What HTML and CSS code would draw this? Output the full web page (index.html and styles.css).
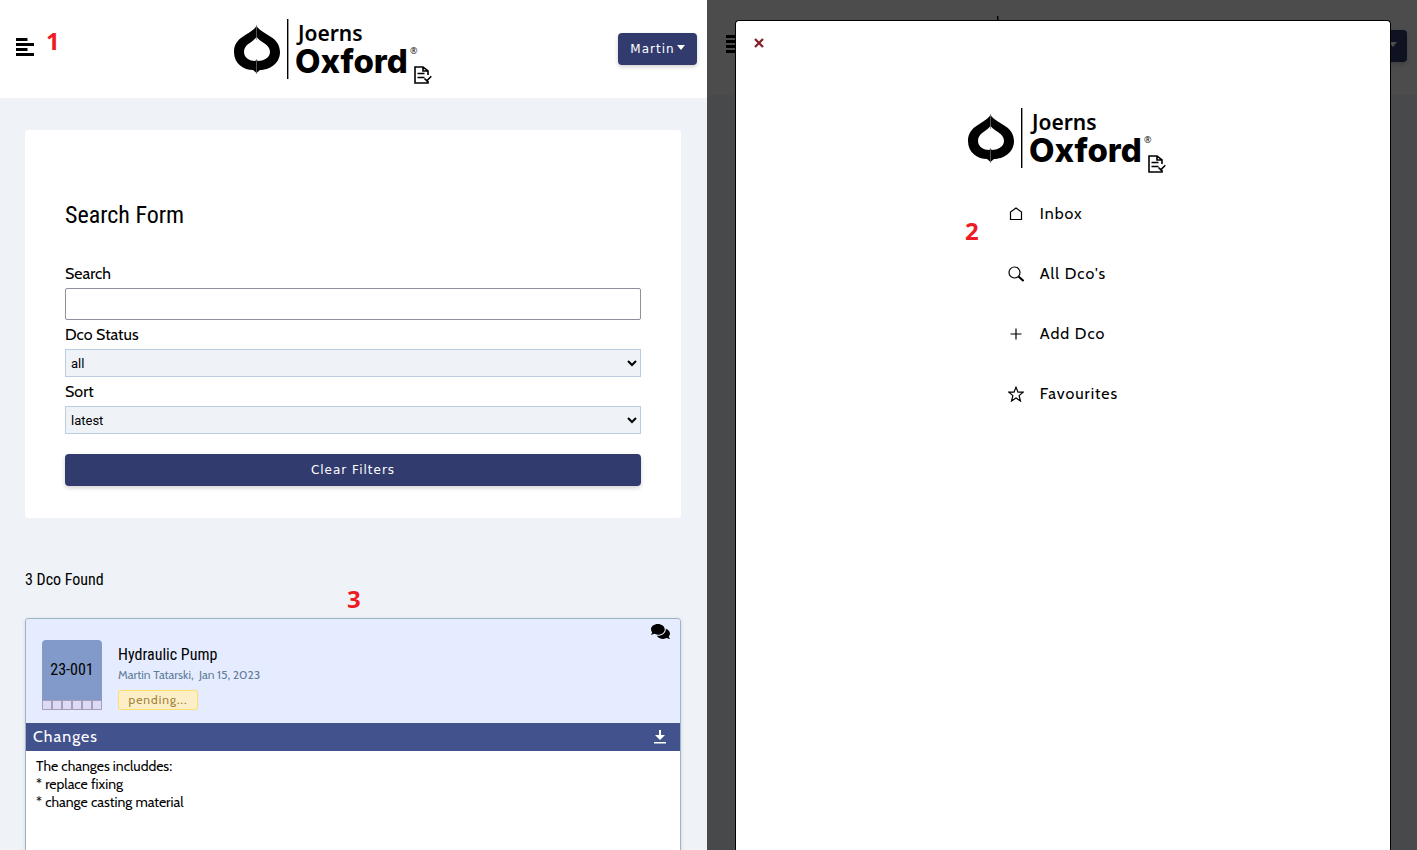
FILE: index.html
```html
<!DOCTYPE html>
<html lang="en">
<head>
<meta charset="utf-8">
<title>Joerns Oxford Dco</title>
<link rel="stylesheet" href="styles.css">
</head>
<body>
<svg class="defs" aria-hidden="true">
  <symbol id="menu" viewBox="0 0 18 18"><path d="M.5 0h10.500q.5 0 .5.500v2q0 .5-.5.500H.500q-.5 0-.5-.5v-2Q0 0 .5 0zM0 5h18v3H0zM0 10h11.500v3H0zM0 15h18v3H0z"/></symbol>
  <symbol id="logo" viewBox="0 0 200 68">
    <path fill-rule="evenodd" d="M23.500 8C18 17 1 18 1 34C1 46 11 52 20 52L23.500 55L27 52C36 52 47 46 47 34C47 18 29 17 23.500 8ZM23.500 19C19 25 11 26 11 34C11 40 17 43 22 43L23.500 42L25 43C30 43 37 40 37 34C37 26 28 25 23.500 19Z"/>
    <path d="M23.500 7v15M23.500 41v15" stroke="#777" stroke-width=".7"/>
    <path d="M54 1h1.400v60H54z"/>
    <path fill="none" stroke="currentColor" stroke-width="1.600" d="M195 57v-4l-5-4h-8v16h13v-2M190 49v4h5M184.500 55.500h7M184.500 59.500h7M191.500 60.500l2.300 2.300 4.500-4.500"/>
  </symbol>
</svg>
<div class="screens">
  <section class="screen">
    <header class="topbar">
      <button class="menu-button" aria-label="Open menu"><svg class="menu-icon"><use href="#menu"/></svg></button>
      <svg class="logo" viewBox="0 0 200 68" role="img" aria-label="Joerns Oxford">
        <use href="#logo"/>
        <text class="logo-small" x="65" y="23">Joerns</text>
        <text class="logo-large" x="62" y="55">Oxford</text>
        <text class="logo-mark" x="177" y="36">®</text>
      </svg>
      <button class="button user-button">Martin<span class="caret"></span></button>
      <span class="note note-one">1</span>
    </header>
    <main class="content">
      <form class="search-form">
        <h1 class="form-title">Search Form</h1>
        <label class="label" for="search">Search</label>
        <input class="field" id="search" type="text">
        <label class="label" for="status">Dco Status</label>
        <select class="select" id="status"><option>all</option></select>
        <label class="label" for="sort">Sort</label>
        <select class="select" id="sort"><option>latest</option></select>
        <button class="button clear-button" type="button">Clear Filters</button>
      </form>
      <h2 class="result-title">3 Dco Found</h2>
      <article class="card">
        <span class="note note-three">3</span>
        <header class="card-head">
          <div class="number">
            <div class="number-box">23-001</div>
            <div class="steps"><i class="step"></i><i class="step"></i><i class="step"></i><i class="step"></i><i class="step"></i><i class="step"></i></div>
          </div>
          <div class="card-info">
            <h3 class="card-title">Hydraulic Pump</h3>
            <p class="meta">Martin Tatarski,&nbsp; Jan 15, 2023</p>
            <span class="status">pending...</span>
          </div>
          <svg class="chat-icon" viewBox="0 0 576 512" role="img" aria-label="Comments"><path d="M416 192c0-88.400-93.100-160-208-160S0 103.600 0 192c0 34.300 14.100 65.900 38 92-13.400 30.200-35.500 54.200-35.800 54.500-2.200 2.300-2.800 5.700-1.500 8.700S4.800 352 8 352c36.600 0 66.900-12.300 88.700-25 32.200 15.700 70.300 25 111.300 25 114.900 0 208-71.600 208-160zm122 220c23.900-26 38-57.700 38-92 0-66.900-53.500-124.200-129.300-148.100.9 6.600 1.300 13.300 1.300 20.100 0 105.900-107.700 192-240 192-10.800 0-21.300-.8-31.700-1.900C207.800 439.600 281.800 480 368 480c41 0 79.100-9.200 111.300-25 21.800 12.700 52.100 25 88.700 25 3.200 0 6.100-1.900 7.300-4.800 1.300-2.900.7-6.300-1.500-8.700-.3-.3-22.400-24.200-35.800-54.500z"/></svg>
        </header>
        <div class="changes-bar">
          <h4 class="changes-title">Changes</h4>
          <button class="download" aria-label="Download changes"><svg class="download-icon" viewBox="0 0 12 14"><path d="M5 0h2v5h4L6 10 1 5h4zM0 12h12v1.500H0z"/></svg></button>
        </div>
        <p class="changes-text">The changes includdes:<br>* replace fixing<br>* change casting material</p>
      </article>
    </main>
  </section>
  <section class="screen screen-dimmed">
    <div class="backdrop" aria-hidden="true">
      <div class="topbar topbar-behind">
        <span class="menu-button"><svg class="menu-icon"><use href="#menu"/></svg></span>
        <svg class="logo" viewBox="0 0 200 68"><use href="#logo"/></svg>
        <span class="button user-button"><span class="caret"></span></span>
      </div>
    </div>
    <aside class="drawer">
      <button class="close" aria-label="Close menu"><svg class="close-icon" viewBox="0 0 10 10"><path d="M1 1l8 8M9 1l-8 8"/></svg></button>
      <svg class="logo drawer-logo" viewBox="0 0 200 68" role="img" aria-label="Joerns Oxford">
        <use href="#logo"/>
        <text class="logo-small" x="65" y="23">Joerns</text>
        <text class="logo-large" x="62" y="55">Oxford</text>
        <text class="logo-mark" x="177" y="36">®</text>
      </svg>
      <nav class="nav">
        <a class="nav-link" href="#"><svg class="nav-icon" viewBox="0 0 16 16"><path d="M2.500 13.500V6L8 2l5.500 4v7.500z"/></svg>Inbox</a>
        <a class="nav-link" href="#"><svg class="nav-icon" viewBox="0 0 16 16"><circle cx="6.500" cy="6.500" r="5.500"/><path d="M10.500 10.500l5 4.500" stroke-width="2"/></svg>All Dco's</a>
        <a class="nav-link" href="#"><svg class="nav-icon" viewBox="0 0 16 16"><path d="M8 2.500v11M2.500 8h11"/></svg>Add Dco</a>
        <a class="nav-link" href="#"><svg class="nav-icon" viewBox="0 0 16 16"><path d="M8 1.200l2 5h5.200l-4.100 3.400 1.400 5.400L8 12l-4.500 3 1.400-5.400L.8 6.200H6z"/></svg>Favourites</a>
      </nav>
      <span class="note note-two">2</span>
    </aside>
  </section>
</div>
</body>
</html>
```
FILE: styles.css
```css
* { box-sizing: border-box; }
body {
  margin: 0;
  color: #000;
  font: 16px/20px Cabin, Lato, sans-serif;
}
h1, h2, h3, h4, p { margin: 0; font-weight: 400; }
.defs { position: absolute; width: 0; height: 0; }
.screens {
  display: grid;
  grid-template-columns: 707fr 710fr;
  min-height: 100vh;
}
.screen {
  display: flex;
  flex-direction: column;
  background: #eff3f8;
}
.topbar {
  position: relative;
  display: flex;
  align-items: center;
  justify-content: space-between;
  height: 98px;
  padding: 0 10px 0 16px;
  background: #fff;
}
.menu-button {
  width: 32px;
  padding: 0;
  border: 0;
  background: none;
  text-align: left;
}
.menu-icon { display: block; width: 18px; height: 18px; margin-bottom: 4px; }
.logo { width: 200px; height: 68px; margin-top: 6px; }
.logo-small { font: 600 21px "Noto Sans", sans-serif; }
.logo-large { font: 800 33px Inter, "Open Sans", sans-serif; }
.logo-mark { font: 9px "Open Sans", sans-serif; }
.button {
  height: 32px;
  border: 0;
  border-radius: 4px;
  background: #323b6e;
  color: #fff;
  font: 12px/20px "DejaVu Sans", sans-serif;
  letter-spacing: 1px;
  box-shadow: 0 2px 4px rgba(0, 0, 0, .18);
}
.user-button {
  display: flex;
  align-items: center;
  justify-content: center;
  gap: 2px;
  width: 79px;
  padding: 0;
}
.caret {
  margin-bottom: 3px;
  border: 4px solid transparent;
  border-top: 5px solid #fff;
  border-bottom: 0;
}
.note {
  position: absolute;
  color: #ed1c24;
  font: 700 24px/24px "Open Sans", sans-serif;
}
.note-one { left: 46px; top: 29px; }
.note-two { left: 229px; top: 198px; }
.note-three { left: 321px; top: -32px; }
.content {
  display: flex;
  flex: 1;
  flex-direction: column;
  padding: 32px 26px 0 25px;
}
.search-form {
  display: flex;
  flex-direction: column;
  padding: 69px 40px 32px;
  border-radius: 4px;
  background: #fff;
}
.form-title {
  margin-bottom: 28px;
  font: 24px/32px "Roboto Condensed", "Liberation Sans Narrow", Roboto, sans-serif;
}
.label { margin: 5px 0 4px; }
.field {
  height: 32px;
  border: 1px solid #8f8f9d;
  border-radius: 2px;
  background: #fff;
}
.select {
  height: 28px;
  padding: 0 1px;
  border: 1px solid #bccce0;
  border-radius: 0;
  background-color: #eff3f8;
  color: #000;
  font: 13px Roboto, sans-serif;
}
.clear-button { margin-top: 20px; }
.result-title {
  margin: 52px 0 28px;
  font: 16px/20px "Roboto Condensed", "Liberation Sans Narrow", Roboto, sans-serif;
}
.card {
  position: relative;
  flex: 1;
  border: 1px solid #9fb3c8;
  border-bottom: 0;
  border-radius: 4px 4px 0 0;
  background: #fff;
  box-shadow: 0 1px 4px rgba(0, 0, 0, .12);
}
.card-head {
  display: flex;
  align-items: flex-start;
  gap: 16px;
  height: 104px;
  padding: 21px 10px 12px 16px;
  border-radius: 3px 3px 0 0;
  background: #e6ecff;
}
.number { width: 60px; }
.number-box {
  border-radius: 4px 4px 0 0;
  background: #829ac9;
  font: 16px/60px "Roboto Condensed", "Liberation Sans Narrow", Roboto, sans-serif;
  text-align: center;
}
.steps { display: grid; grid-template-columns: repeat(6, 1fr); }
.step { height: 10px; border: 1px solid #a5a0b8; background: #dcdaf7; }
.card-info { flex: 1; padding-top: 5px; }
.card-title { font: 16px/20px "Roboto Condensed", "Liberation Sans Narrow", Roboto, sans-serif; }
.meta { margin-bottom: 5px; color: #627d98; font-size: 12px; }
.status {
  display: block;
  width: 80px;
  border: 1px solid #ffdc6e;
  border-radius: 3px;
  background: #fcefc7;
  color: #a08038;
  font-size: 12px;
  line-height: 18px;
  letter-spacing: 1px;
  text-align: center;
}
.chat-icon { width: 19px; height: 17px; margin-top: -17px; }
.changes-bar {
  display: flex;
  align-items: center;
  justify-content: space-between;
  height: 28px;
  padding: 0 14px 0 7px;
  background: #42528c;
  color: #fff;
}
.changes-title { letter-spacing: 1px; }
.download { padding: 0; border: 0; background: none; }
.download-icon { display: block; width: 12px; height: 14px; fill: #fff; }
.changes-text { padding: 6px 10px; font-size: 14px; line-height: 18px; }
.screen-dimmed { position: relative; background: #48494a; }
.backdrop { position: absolute; inset: 0; overflow: hidden; }
.topbar-behind { margin-top: -3px; padding-left: 19px; background: #4c4c4c; }
.topbar-behind .button { padding-left: 51px; background: #0f1221; }
.topbar-behind .caret { border-top-color: #4c4c4c; }
.drawer {
  position: relative;
  display: flex;
  flex: 1;
  flex-direction: column;
  align-items: center;
  margin: 20px 26px 0 28px;
  border: 1px solid #000;
  border-bottom: 0;
  border-radius: 4px 4px 0 0;
  background: #fff;
}
.close {
  align-self: flex-start;
  margin: 17px 0 0 18px;
  padding: 0;
  border: 0;
  background: none;
}
.close-icon { display: block; width: 10px; height: 10px; fill: none; stroke: #842029; stroke-width: 2.3; }
.drawer-logo { margin: 59px 0 9px 8px; }
.nav { display: flex; flex-direction: column; gap: 40px; padding: 20px 0; }
.nav-link {
  display: flex;
  align-items: center;
  gap: 16px;
  color: #000;
  letter-spacing: 1px;
  text-decoration: none;
}
.nav-icon { width: 16px; height: 16px; fill: none; stroke: #000; stroke-width: 1.2; }
```
